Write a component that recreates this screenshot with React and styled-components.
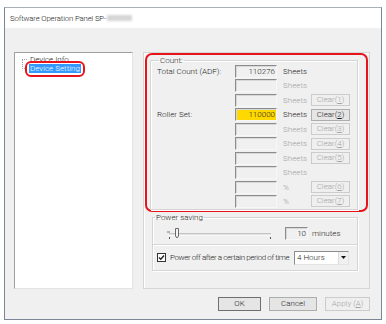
import React from 'react';
import styled, { createGlobalStyle, css } from 'styled-components';

const GlobalStyle = createGlobalStyle`
    html, body {
        margin: 0;
        padding: 0;
        background: #ffffff;
    }
    body {
        font-family: Roboto, "Liberation Sans", Arial, sans-serif;
        font-size: 8px;
        font-weight: 300;
        color: #1e1e1e;
    }
    * {
        box-sizing: border-box;
    }
`;

const Window = styled.div`
    margin: 7px 0 0 4px;
    width: 378px;
    height: 313px;
    border: 1px solid #7b8797;
    border-top-color: #a9b0ba;
    background: #f0f0f0;
    display: flex;
    flex-direction: column;
`;

const TitleBar = styled.div`
    height: 20px;
    background: #ffffff;
    display: flex;
    align-items: center;
    padding-left: 5px;
    font-size: 7.8px;
    letter-spacing: -0.15px;
`;

const Blurred = styled.span`
    display: inline-block;
    width: 25px;
    height: 6px;
    margin-left: 1px;
    background: #d6d6d6;
    filter: blur(1px);
`;

const Body = styled.div`
    flex: 1;
    padding: 24px 11px 0 9px;
    display: flex;
    flex-direction: column;
`;

const Content = styled.div`
    display: flex;
    gap: 10px;
    height: 237px;
`;

const TreePanel = styled.div`
    width: 119px;
    background: #ffffff;
    border: 1px solid;
    border-color: #a0a0a0 #e3e3e3 #e3e3e3 #a0a0a0;
    padding: 2px 0 0 7px;
`;

const TreeList = styled.div`
    position: relative;
    display: flex;
    flex-direction: column;
    padding-left: 7px;
    &::before {
        content: '';
        position: absolute;
        left: 0;
        top: 4px;
        height: 10px;
        border-left: 1px dotted #a0a0a0;
    }
`;

const TreeItem = styled.div`
    position: relative;
    height: 9px;
    line-height: 9px;
    display: flex;
    align-items: center;
    &::before {
        content: '';
        position: absolute;
        left: -7px;
        top: 4px;
        width: 5px;
        border-top: 1px dotted #a0a0a0;
    }
`;

const TreeLabel = styled.span`
    padding: 0 1px;
    ${p => p.$selected && css`
        background: #3399ff;
        color: #ffffff;
        position: relative;
    `}
`;

const Annotation = styled.span`
    position: absolute;
    left: -4px;
    right: -4px;
    top: -3px;
    bottom: -4px;
    border: 2px solid #e8131b;
    border-radius: 6px;
    pointer-events: none;
`;

const RightPanel = styled.div`
    width: 227px;
    border: 1px solid #d5d5d5;
    box-shadow: inset 1px 1px 0 #ffffff;
    padding: 0 1px;
    display: flex;
    flex-direction: column;
`;

const RedFrame = styled.div`
    height: 159px;
    border: 2px solid #e8131b;
    border-radius: 7px;
    padding: 1px 8px 0 3px;
`;

const Group = styled.fieldset`
    margin: 0;
    border: 1px solid #d5d5d5;
    box-shadow: 1px 1px 0 #ffffff, inset 1px 1px 0 #ffffff;
    padding: ${p => p.$padding || '0'};
    min-width: 0;
`;

const Legend = styled.legend`
    font-size: 8px;
    line-height: 9px;
    padding: 0 1px;
    margin-left: 2px;
`;

const CountGrid = styled.div`
    display: grid;
    grid-template-columns: 78px 42px 34px 39px;
    grid-auto-rows: 13px;
    row-gap: 1.45px;
    align-items: center;
`;

const RowLabel = styled.span`
    grid-column: 1;
    white-space: nowrap;
`;

const TextBox = styled.div`
    height: 13px;
    width: ${p => p.$width || 42}px;
    margin-left: ${p => p.$offset || 0}px;
    border: 1px solid;
    border-color: #8c8c8c #f7f7f7 #f7f7f7 #8c8c8c;
    box-shadow: inset 1px 1px 0 #d8d8d8;
    background: ${p => (p.$highlight ? '#ffd800' : '#f0f0f0')};
    text-align: right;
    padding-right: 1px;
    line-height: 11px;
    font-size: 8px;
`;

const Unit = styled.span`
    padding-left: 6px;
    color: ${p => (p.$disabled ? '#a3a3a3' : 'inherit')};
`;

const Button = styled.button`
    font-family: inherit;
    font-weight: 300;
    font-size: 8px;
    height: ${p => p.$height || 12}px;
    width: ${p => p.$width || 39}px;
    padding: 0;
    line-height: 1;
    border: 1px solid ${p => (p.disabled ? '#cccccc' : p.$default ? '#6f6f6f' : '#adadad')};
    background: ${p => (p.disabled ? '#efefef' : '#e5e5e5')};
    color: ${p => (p.disabled ? '#a3a3a3' : '#1e1e1e')};
    u {
        text-decoration: underline;
    }
`;

const ClearCell = styled.div`
    grid-column: 4;
    display: flex;
    align-items: center;
`;

const PowerWrap = styled.div`
    margin: 1px 10px 0 7px;
`;

const PowerTop = styled.div`
    height: 23px;
    display: flex;
    align-items: center;
    border-bottom: 1px solid #d5d5d5;
    box-shadow: 0 1px 0 #ffffff;
    padding-left: 14px;
`;

const PowerBottom = styled.div`
    height: 25px;
    display: flex;
    align-items: center;
    padding: 0 8px 0 4px;
`;

const Minutes = styled.span`
    margin-left: 4px;
`;

const CheckBox = styled.span`
    flex: none;
    width: 9px;
    height: 9px;
    border: 1px solid #333333;
    background: #ffffff;
    display: flex;
    align-items: center;
    justify-content: center;
`;

const CheckLabel = styled.span`
    margin-left: 4px;
    white-space: nowrap;
    letter-spacing: -0.4px;
`;

const Select = styled.div`
    flex: none;
    margin-left: auto;
    width: 55px;
    height: 14px;
    background: #ffffff;
    border: 1px solid;
    border-color: #8c8c8c #e3e3e3 #e3e3e3 #8c8c8c;
    display: flex;
    align-items: stretch;
`;

const SelectText = styled.span`
    flex: 1;
    padding-left: 2px;
    line-height: 11px;
`;

const SelectArrow = styled.span`
    width: 10px;
    background: #f0f0f0;
    border-left: 1px solid #dcdcdc;
    display: flex;
    align-items: center;
    justify-content: center;
`;

const Footer = styled.div`
    display: flex;
    justify-content: flex-end;
    gap: 8px;
    padding-top: 8px;
`;

const rows = [
    { label: 'Total Count (ADF):', value: '110276', unit: 'Sheets' },
    { unit: 'Sheets', disabled: true },
    { unit: 'Sheets', disabled: true, clear: '1' },
    { label: 'Roller Set:', value: '110000', unit: 'Sheets', highlight: true, clear: '2', enabled: true },
    { unit: 'Sheets', disabled: true, clear: '3' },
    { unit: 'Sheets', disabled: true, clear: '4' },
    { unit: 'Sheets', disabled: true, clear: '5' },
    { unit: 'Sheets', disabled: true },
    { unit: '%', disabled: true, clear: '6' },
    { unit: '%', disabled: true, clear: '7' },
];

const Trackbar = () => (
    <svg width="106" height="14" viewBox="0 0 106 14">
        <line x1="2" y1="8" x2="104" y2="8" stroke="#9a9a9a" strokeWidth="1" />
        <line x1="2" y1="9" x2="104" y2="9" stroke="#ffffff" strokeWidth="1" />
        <line x1="0" y1="6" x2="3" y2="6" stroke="#7a7a7a" strokeWidth="1" />
        <rect x="2" y="11" width="1" height="2" fill="#555" />
        <rect x="103" y="11" width="1" height="2" fill="#555" />
        <path d="M8.5 2.5 L8.5 10 L10 12 L11.5 10 L11.5 2.5 Z" fill="#f4f4f4" stroke="#6a6a6a" strokeWidth="1" />
    </svg>
);

const App = () => (
    <>
        <GlobalStyle />
        <Window>
            <TitleBar>
                Software Operation Panel SP-<Blurred />
            </TitleBar>
            <Body>
                <Content>
                    <TreePanel>
                        <TreeList>
                            <TreeItem><TreeLabel>Device Info</TreeLabel></TreeItem>
                            <TreeItem>
                                <TreeLabel $selected>
                                    Device Setting
                                    <Annotation />
                                </TreeLabel>
                            </TreeItem>
                        </TreeList>
                    </TreePanel>
                    <RightPanel>
                        <RedFrame>
                            <Group $padding="0 4px 1px 6px">
                                <Legend>Count:</Legend>
                                <CountGrid>
                                    {rows.map((r, i) => (
                                        <React.Fragment key={i}>
                                            <RowLabel>{r.label || ''}</RowLabel>
                                            <TextBox $highlight={r.highlight}>{r.value}</TextBox>
                                            <Unit $disabled={r.disabled}>{r.unit}</Unit>
                                            <ClearCell>
                                                {r.clear && (
                                                    <Button disabled={!r.enabled}>
                                                        Clear(<u>{r.clear}</u>)
                                                    </Button>
                                                )}
                                            </ClearCell>
                                        </React.Fragment>
                                    ))}
                                </CountGrid>
                            </Group>
                        </RedFrame>
                        <PowerWrap>
                            <Group>
                                <Legend>Power saving</Legend>
                                <PowerTop>
                                    <Trackbar />
                                    <TextBox $width={23} $offset={12}>10</TextBox>
                                    <Minutes>minutes</Minutes>
                                </PowerTop>
                                <PowerBottom>
                                    <CheckBox>
                                        <svg width="7" height="7" viewBox="0 0 7 7">
                                            <path d="M1 3.5 L2.8 5.3 L6 1.5" fill="none" stroke="#222" strokeWidth="1.4" />
                                        </svg>
                                    </CheckBox>
                                    <CheckLabel>Power off after a certain period of time</CheckLabel>
                                    <Select>
                                        <SelectText>4 Hours</SelectText>
                                        <SelectArrow>
                                            <svg width="5" height="3" viewBox="0 0 5 3">
                                                <path d="M0 0 L5 0 L2.5 3 Z" fill="#111" />
                                            </svg>
                                        </SelectArrow>
                                    </Select>
                                </PowerBottom>
                            </Group>
                        </PowerWrap>
                    </RightPanel>
                </Content>
                <Footer>
                    <Button $default $width={43} $height={14}>OK</Button>
                    <Button $width={48} $height={14}>Cancel</Button>
                    <Button disabled $width={45} $height={14}>Apply (<u>A</u>)</Button>
                </Footer>
            </Body>
        </Window>
    </>
);

export default App;
